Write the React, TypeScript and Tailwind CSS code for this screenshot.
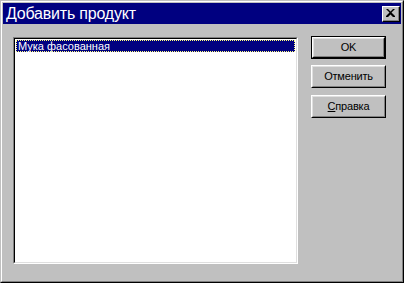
import React from "react";

const Btn: React.FC<{ children: React.ReactNode; def?: boolean }> = ({ children, def }) => {
  const inner = (
    <div className="h-full border-t border-l border-white border-b border-r border-b-black border-r-black">
      <div className="h-full border-t border-l border-[#dfdfdf] border-b border-r border-b-[#808080] border-r-[#808080] bg-[#c0c0c0] flex items-center justify-center text-[11px] tracking-[-0.2px] text-black">
        {children}
      </div>
    </div>
  );
  return def ? (
    <div className="w-[75px] h-[23px] border border-black">{inner}</div>
  ) : (
    <div className="w-[75px] h-[23px]">{inner}</div>
  );
};

const App: React.FC = (): JSX.Element => {
  return (
    <div
      className="w-[404px] h-[283px] bg-[#c0c0c0] border-t border-l border-[#c0c0c0] border-b border-r border-b-black border-r-black"
      style={{ fontFamily: '"Liberation Sans", Arial, sans-serif' }}
    >
      <div className="h-full border-t border-l border-white border-b border-r border-b-[#808080] border-r-[#808080] p-[1px] flex flex-col">
        <div className="h-[21px] bg-[#000080] flex items-center justify-between pl-[3px] pr-[1px]">
          <span className="text-white text-[16px] leading-none tracking-[-0.2px]">Добавить продукт</span>
          <div className="w-[18px] h-[16px] border-t border-l border-white border-b border-r border-b-black border-r-black">
            <div className="w-full h-full bg-[#c0c0c0] border-b border-r border-[#808080] flex items-center justify-center">
              <svg width="9" height="8" viewBox="0 0 9 8">
                <path d="M0 0h2l2.5 2.5L7 0h2L5.5 3.5 9 7v1H7L4.5 5.5 2 8H0V7l3.5-3.5L0 0z" fill="black" />
              </svg>
            </div>
          </div>
        </div>

        <div className="flex flex-row pl-[10px] pt-[12px]">
          <div className="mt-[1px] w-[285px] h-[227px] border-t border-l border-[#808080] border-b border-r border-b-white border-r-white">
            <div className="w-full h-full bg-white border-t border-l border-black border-b border-r border-b-[#dfdfdf] border-r-[#dfdfdf] p-[1px]">
              <div className="h-[12px] bg-[#000080] border border-dotted border-[#ffff80] flex items-center text-white text-[11px] leading-none pl-[1px]">
                Мука фасованная
              </div>
            </div>
          </div>

          <div className="ml-[13px] flex flex-col gap-[6px]">
            <Btn def>OK</Btn>
            <Btn>Отменить</Btn>
            <div className="mt-[1px]">
              <Btn>
                <span>
                  <span className="underline">С</span>правка
                </span>
              </Btn>
            </div>
          </div>
        </div>
      </div>
    </div>
  );
};

export default App;
